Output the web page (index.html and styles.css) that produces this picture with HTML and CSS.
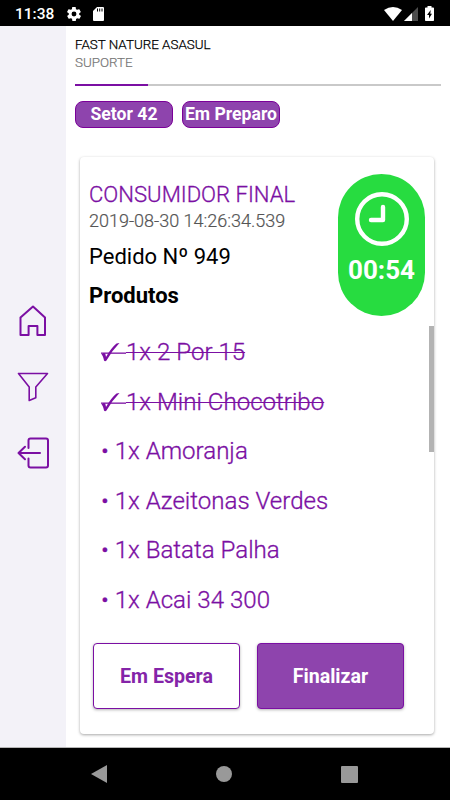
FILE: index.html
```html
<!DOCTYPE html>
<html lang="pt-BR">
<head>
    <meta charset="UTF-8">
    <meta name="viewport" content="width=device-width, initial-scale=1.0">
    <title>Pedidos</title>
    <link rel="stylesheet" href="styles.css">
</head>
<body>
    <div class="status-bar">
        <span class="status-time">11:38</span>
        <svg class="status-gear" width="14" height="14" viewBox="2 2 20 20" fill="#fff"><path d="M19.4 13c0-.3.1-.6.1-1s0-.7-.1-1l2.100-1.600c.2-.2.2-.4.1-.6l-2-3.500c-.1-.2-.4-.3-.6-.2l-2.500 1c-.5-.4-1.100-.7-1.700-1l-.4-2.600c0-.3-.2-.5-.5-.5h-4c-.2 0-.4.2-.5.4l-.4 2.700c-.6.2-1.200.6-1.700 1l-2.500-1c-.2-.1-.5 0-.6.2l-2 3.500c-.1.2-.1.4.1.6L4.600 11c0 .3-.1.6-.1 1s0 .7.1 1l-2.100 1.600c-.2.2-.2.4-.1.6l2 3.500c.1.2.4.3.6.2l2.500-1c.5.4 1.100.7 1.700 1l.4 2.700c0 .2.200.4.500.4h4c.3 0 .5-.2.5-.4l.4-2.700c.6-.2 1.200-.6 1.700-1l2.500 1c.2.1.5 0 .6-.2l2-3.500c.1-.2.1-.4-.1-.6zM12 15.500a3.500 3.500 0 1 1 0-7 3.500 3.500 0 0 1 0 7z"/></svg>
        <svg class="status-card" width="11" height="14" viewBox="0 0 11 14"><path d="M4 0h6a1 1 0 0 1 1 1v12a1 1 0 0 1-1 1H1a1 1 0 0 1-1-1V4z" fill="#fff"/><path d="M4.500 1.500v3M6.700 1.500v3M9 1.500v3" stroke="#000" stroke-width="1"/></svg>
        <div class="status-right">
            <svg width="18" height="14" viewBox="0 0 18 14"><path d="M0 3Q9-3 18 3L9 14z" fill="#fff"/></svg>
            <svg class="status-signal" width="14" height="14" viewBox="0 0 14 14"><path d="M14 0v14H0z" fill="#4d4d4d"/><path d="M8 6v8H0z" fill="#fff"/></svg>
            <svg class="status-battery" width="9" height="15" viewBox="0 0 9 15"><path d="M2.500 0h4v1.500H8.200q.8 0 .8.800v11.900q0 .8-.8.800H.8q-.8 0-.8-.8V2.300q0-.8.8-.8h1.700z" fill="#fff"/><path d="M5.700 4L2 9h2v3.500L7 7.700H5.300z" fill="#000"/></svg>
        </div>
    </div>

    <div class="app">
        <nav class="sidebar">
            <svg width="28" height="32" viewBox="0 0 28 32"><path d="M1.500 12.500L14 1.500l12 11V30h-7.600v-9h-8.800v9H1.500z"/></svg>
            <svg width="32" height="30" viewBox="0 0 32 30"><path class="thin" d="M1.500 1.500h29L18.800 15v10.800l-6.600 2.600V15z"/></svg>
            <svg width="32" height="32" viewBox="0 0 32 32"><path d="M11.500 11V3.500q0-2 2-2H29q2 0 2 2v25q0 2-2 2H13.500q-2 0-2-2V21.500M23 16H1.500M8 9.800L1.500 16 8 22.200"/></svg>
        </nav>

        <main class="content">
            <header class="header">
                <div class="company">FAST NATURE ASASUL</div>
                <div class="user">SUPORTE</div>
            </header>
            <div class="progress"><div class="progress-fill"></div></div>
            <div class="tags">
                <span class="tag">Setor 42</span>
                <span class="tag">Em Preparo</span>
            </div>

            <section class="card">
                <div class="card-top">
                    <div class="order-info">
                        <div class="customer">CONSUMIDOR FINAL</div>
                        <div class="date">2019-08-30 14:26:34.539</div>
                        <div class="order-number">Pedido Nº 949</div>
                        <div class="products-title">Produtos</div>
                    </div>
                    <div class="timer">
                        <svg width="54" height="54" viewBox="0 0 54 54"><circle cx="27" cy="27" r="24.800"/><path d="M28 15v13H16"/></svg>
                        <span>00:54</span>
                    </div>
                </div>
                <ul class="products">
                    <li class="done">
                        <svg class="check" width="25" height="20" viewBox="0 0 25 20"><path d="M.5 12.500Q2.500 10 4.200 11.500Q4.800 13 5 15Q10 6 15.500 1.500L18.500 1Q11 8.500 5.500 18.500Q4 19.800 3 18.500Q2 13.500.5 12.500z"/><path d="M0 10.500h25v1.300H0z"/></svg>
                        <span>1x 2 Por 15</span>
                    </li>
                    <li class="done">
                        <svg class="check" width="25" height="20" viewBox="0 0 25 20"><path d="M.5 12.500Q2.500 10 4.200 11.500Q4.800 13 5 15Q10 6 15.500 1.500L18.500 1Q11 8.500 5.500 18.500Q4 19.800 3 18.500Q2 13.500.5 12.500z"/><path d="M0 10.500h25v1.300H0z"/></svg>
                        <span>1x Mini Chocotribo</span>
                    </li>
                    <li>• 1x Amoranja</li>
                    <li>• 1x Azeitonas Verdes</li>
                    <li>• 1x Batata Palha</li>
                    <li>• 1x Acai 34 300</li>
                </ul>
                <div class="actions">
                    <button class="btn btn-outline">Em Espera</button>
                    <button class="btn btn-primary">Finalizar</button>
                </div>
                <div class="scrollbar"></div>
            </section>
        </main>
    </div>

    <div class="nav-bar">
        <svg width="16" height="18" viewBox="0 0 16 18"><path d="M16 0v18L0 9z"/></svg>
        <svg width="16" height="16" viewBox="0 0 16 16"><circle cx="8" cy="8" r="8"/></svg>
        <svg width="17" height="17" viewBox="0 0 17 17"><rect width="17" height="17" rx="1"/></svg>
    </div>
</body>
</html>
```
FILE: styles.css
```css
* { margin: 0; padding: 0; box-sizing: border-box; }

body {
    font-family: Roboto, sans-serif;
    width: 450px;
    height: 800px;
    display: flex;
    flex-direction: column;
    background: #fff;
    color: #000;
    overflow: hidden;
}

svg {
    display: block;
    flex-shrink: 0;
}

.status-bar {
    height: 26px;
    background: #000;
    color: #fff;
    display: flex;
    align-items: center;
    padding: 1px 16px 0 15px;
}

.status-time {
    width: 52px;
    font-size: 15.5px;
    font-weight: 500;
}

.status-card {
    margin-left: 12px;
}

.status-right {
    margin-left: auto;
    display: flex;
    align-items: center;
}

.status-signal {
    margin-left: 2px;
}

.status-battery {
    margin-left: 7px;
}

.app {
    height: 722px;
    display: flex;
    border-bottom: 1px solid #b5b5b5;
}

.sidebar {
    width: 66px;
    background: #f3f2f8;
    display: flex;
    flex-direction: column;
    align-items: center;
    gap: 35px;
    padding-top: 279px;
}

.sidebar path {
    fill: none;
    stroke: #7b0fa3;
    stroke-width: 2;
    stroke-linejoin: round;
    stroke-linecap: round;
}

.sidebar .thin {
    stroke-width: 1.6;
}

.content {
    flex: 1;
    padding: 10px 9px 0;
}

.header {
    font-size: 13.4px;
    font-weight: 300;
    line-height: 18px;
    height: 48px;
}

.company {
    -webkit-text-stroke: 0.25px #000;
}

.user {
    color: #777;
    -webkit-text-stroke: 0.2px #777;
}

.progress {
    height: 2px;
    background: #c9c9c9;
}

.progress-fill {
    width: 20%;
    height: 2px;
    background: #7b0fa3;
}

.tags {
    display: flex;
    gap: 9px;
    margin-top: 15px;
}

.tag {
    width: 98px;
    height: 27px;
    line-height: 24px;
    border: 1px solid #7b0099;
    border-radius: 8px;
    background: #8e44ad;
    color: #fff;
    font-size: 17.6px;
    font-weight: 700;
    text-align: center;
    white-space: nowrap;
}

.card {
    position: relative;
    width: 354px;
    height: 577px;
    margin: 29px 0 0 5px;
    padding: 17px 9px 0;
    background: #fff;
    border-radius: 4px;
    box-shadow: 0 1px 3px rgba(0,0,0,0.35);
}

.card-top {
    display: flex;
    justify-content: space-between;
    height: 154px;
}

.order-info {
    padding-top: 7px;
}

.customer {
    color: #7b0fa3;
    font-size: 22.1px;
    font-weight: 300;
    line-height: 27px;
    -webkit-text-stroke: 0.3px #7b0fa3;
}

.date {
    color: #555;
    font-size: 18px;
    font-weight: 300;
    line-height: 26px;
    -webkit-text-stroke: 0.2px #555;
}

.order-number {
    font-size: 22px;
    line-height: 45px;
}

.products-title {
    font-size: 22px;
    font-weight: 700;
    line-height: 33px;
}

.timer {
    width: 87px;
    height: 142px;
    border-radius: 44px;
    background: #27dc40;
    display: flex;
    flex-direction: column;
    align-items: center;
    padding-top: 18px;
    color: #fff;
    font-size: 26px;
    font-weight: 700;
}

.timer svg {
    fill: none;
    stroke: #fff;
    stroke-width: 4.4;
    stroke-linecap: round;
    stroke-linejoin: round;
}

.timer span {
    margin-top: 9px;
}

.products {
    list-style: none;
    padding-left: 12px;
}

.products li {
    height: 49.6px;
    line-height: 48px;
    color: #7b0fa3;
    font-size: 24.1px;
    font-weight: 300;
    white-space: nowrap;
    -webkit-text-stroke: 0.3px #7b0fa3;
}

.products .done {
    display: flex;
}

.done span {
    text-decoration: line-through;
    text-decoration-thickness: 1px;
}

.check {
    margin-top: 14px;
    fill: #7b0fa3;
}

.actions {
    display: flex;
    gap: 17px;
    padding: 17px 0 0 4px;
}

.btn {
    width: 147px;
    height: 66px;
    padding-top: 2px;
    border: 1.5px solid #7b0fa3;
    border-radius: 4px;
    box-shadow: 0 1px 3px rgba(0,0,0,0.3);
    font-family: inherit;
    font-size: 19.6px;
    font-weight: 700;
}

.btn-outline {
    background: #fff;
    color: #8424a8;
}

.btn-primary {
    background: #8e44ad;
    border-width: 1px;
    color: #fff;
}

.scrollbar {
    position: absolute;
    top: 169px;
    right: 0;
    width: 5px;
    height: 126px;
    background: #b3b3b3;
}

.nav-bar {
    height: 52px;
    background: #000;
    display: flex;
    align-items: center;
    justify-content: space-between;
    padding: 0 92px 0 91px;
    fill: #999;
}
```
